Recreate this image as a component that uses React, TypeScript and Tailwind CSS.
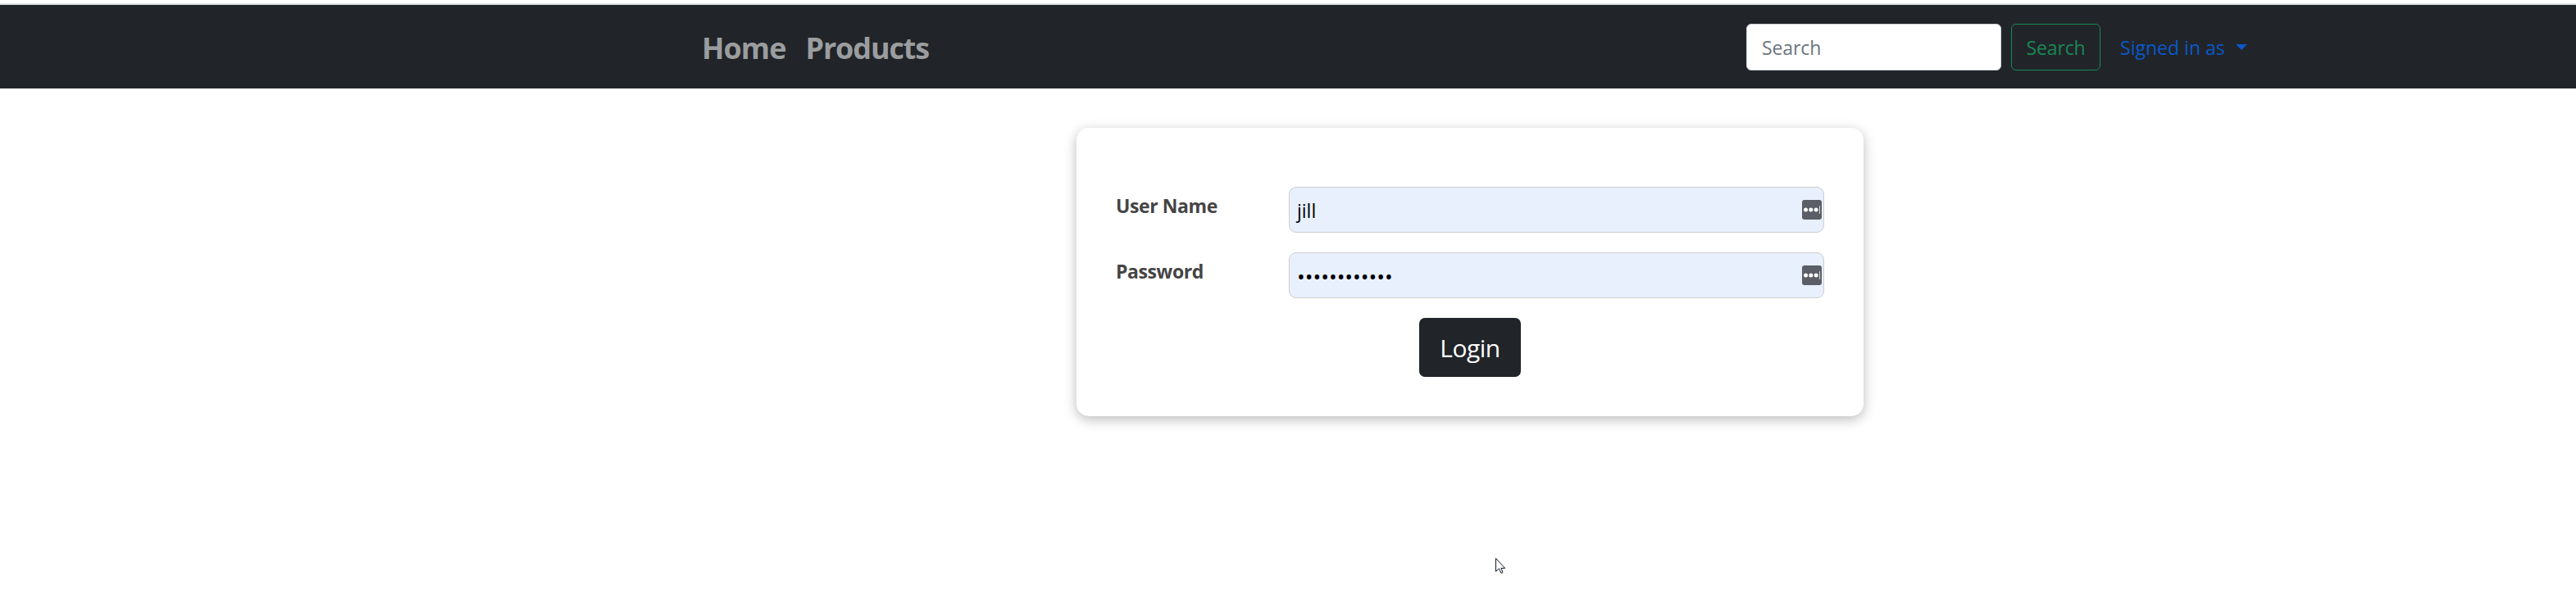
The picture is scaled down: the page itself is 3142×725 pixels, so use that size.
import React from "react";

function KeyBadge() {
  return (
    <svg className="mr-[2px] size-6 shrink-0" viewBox="0 0 24 24">
      <rect width="24" height="24" rx="3" fill="#5b5e66" />
      <circle cx="4.5" cy="12" r="2.5" fill="#fff" />
      <circle cx="10.8" cy="12" r="2.5" fill="#fff" />
      <circle cx="17.1" cy="12" r="2.5" fill="#fff" />
      <rect x="21" y="7" width="1" height="10" fill="#d5d6d8" />
    </svg>
  );
}

function Field({ label, children }: { label: string; children: React.ReactNode }) {
  return (
    <div className="flex h-14">
      <label className="w-[211px] pt-[6px] text-[23px] leading-[34px] font-bold tracking-[-0.4px] text-[#444]">{label}</label>
      <div className="flex flex-1 items-center justify-between rounded-[9px] border border-[#ccc] bg-[#e8f0fe] pl-[9px] text-black">
        {children}
        <KeyBadge />
      </div>
    </div>
  );
}

export default function App() {
  return (
    <div className="relative h-[725px] w-[3142px] overflow-hidden bg-white pt-1 font-['Open_Sans','Noto_Sans',sans-serif] text-[23px]">
      <nav className="flex h-[104px] items-center border-t-2 border-[#dee2e2] bg-[#212529] pr-[401px] pl-[856px]">
        <div className="flex gap-6 pt-1 text-[36px] leading-[54px] font-bold text-[#9b9d9f]">
          <a className="tracking-[-1px]">Home</a>
          <a className="tracking-[-1.15px]">Products</a>
        </div>
        <div className="ml-auto flex items-center">
          <div className="flex h-[57px] w-[311px] items-center rounded-md border border-[#ced4da] bg-white pt-[2px] pl-[18px] tracking-[-0.1px] text-[#6c757d]">Search</div>
          <button className="ml-3 h-[57px] w-[109px] rounded-md border border-[#198754] pt-[2px] tracking-[-0.1px] text-[#198754]">Search</button>
          <a className="ml-6 w-[128px] pt-[2px] tracking-[0.02px] whitespace-nowrap text-[#0a58ca]">Signed in as</a>
          <svg className="ml-[13px] h-[7px] w-[14px]" viewBox="0 0 14 7"><path d="M0 0h14L7 7z" fill="#0a58ca" /></svg>
        </div>
      </nav>
      <main className="mt-12 ml-[1313px] flex h-[352px] w-[960px] flex-col gap-6 rounded-[15px] bg-white px-12 pt-[72px] shadow-[0_4px_15px_rgba(0,0,0,0.27)]">
        <Field label="User Name"><span className="pt-[2px]">jill</span></Field>
        <Field label="Password"><span className="pt-[2px] text-[26px] tracking-[-0.05px]">••••••••••••</span></Field>
        <button className="h-[72px] w-[124px] self-center rounded-[7px] bg-[#212529] text-[30px] tracking-[-0.5px] text-white">Login</button>
      </main>
      <svg className="absolute top-[680px] left-[1823px] h-[22px] w-[15px]" viewBox="0 0 15 22">
        <path d="M1.5 1.5V17.5L5.5 14L8 19.5L10 18.7L8 13.5H12.7Z" fill="#fff" stroke="#111827" strokeWidth="1" />
      </svg>
    </div>
  );
}
